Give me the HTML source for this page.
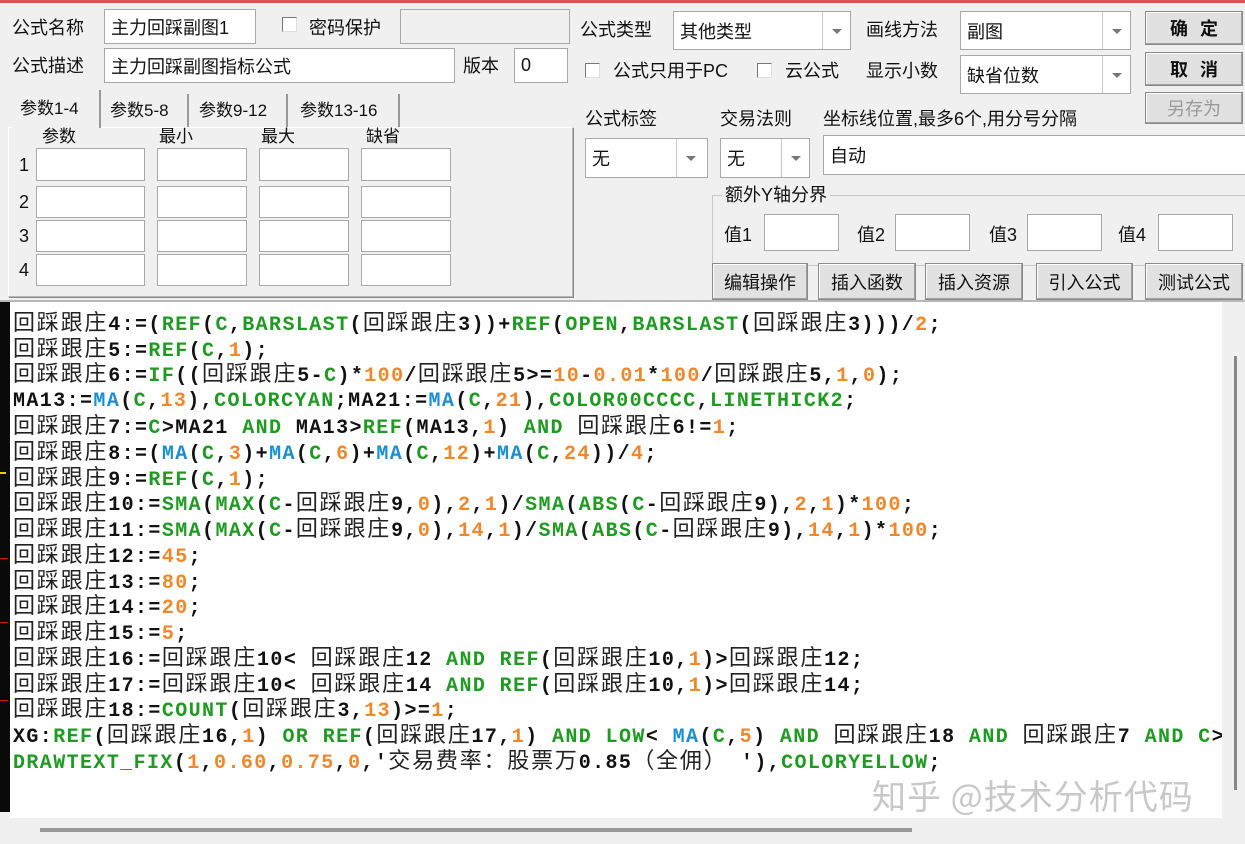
<!DOCTYPE html>
<html><head><meta charset="utf-8"><style>
*{margin:0;padding:0;box-sizing:border-box}
body{width:1245px;height:844px;background:#f0f0f0;position:relative;overflow:hidden;font-family:"Liberation Sans","Noto Sans CJK SC",sans-serif;font-size:18px;color:#111}
.a{position:absolute}
.lb{position:absolute;font-size:18px;line-height:22px;white-space:nowrap}
.in{position:absolute;background:#fff;border:1px solid #a8a8a8;font-size:18px;padding-left:6px;display:flex;align-items:center}
.dis{background:#f0f0f0}
.cb{position:absolute;width:15px;height:15px;border:1px solid #777;background:#fff;border-right-color:#ddd;border-bottom-color:#ddd}
.cmb{position:absolute;background:#fff;border:1px solid #a8a8a8;font-size:18px;padding-left:6px;display:flex;align-items:center}
.cmb .ar{position:absolute;right:0;top:0;bottom:0;width:28px;border-left:1px solid #c8c8c8}
.cmb .ar:after{content:"";position:absolute;left:9px;top:50%;margin-top:-2px;border-left:5px solid transparent;border-right:5px solid transparent;border-top:5px solid #777}
.bt{position:absolute;background:#e1e1e1;border:1px solid #8a8a8a;box-shadow:inset -1px -1px 0 #a0a0a0,inset 1px 1px 0 #fff;font-size:18px;display:flex;align-items:center;justify-content:center}
.code{position:absolute;left:10px;top:302px;width:1212px;height:516px;background:#fff;overflow:hidden}
.ln{position:absolute;left:3px;font-family:"Liberation Mono","Noto Sans CJK SC",monospace;font-weight:bold;font-size:20px;letter-spacing:1.4px;white-space:pre;color:#111;line-height:26px}
.ln .c{font-family:"Noto Sans CJK SC",sans-serif;font-weight:normal;font-size:22px;letter-spacing:1.8px;color:#222}
.g{color:#1f9a22}.o{color:#f0872a}.b{color:#1c8fd4}
</style></head><body>
<div class="a" style="left:0;top:0;width:1245px;height:3px;background:#d9534f"></div>

<div class="lb" style="left:12px;top:17px">公式名称</div>
<div class="in" style="left:104px;top:9px;width:152px;height:35px">主力回踩副图1</div>
<div class="cb" style="left:282px;top:17px"></div>
<div class="lb" style="left:309px;top:17px">密码保护</div>
<div class="in dis" style="left:400px;top:9px;width:170px;height:35px"></div>

<div class="lb" style="left:12px;top:55px">公式描述</div>
<div class="in" style="left:104px;top:48px;width:351px;height:35px">主力回踩副图指标公式</div>
<div class="lb" style="left:463px;top:55px">版本</div>
<div class="in" style="left:514px;top:48px;width:54px;height:35px">0</div>

<div class="a" style="left:8px;top:127px;width:565px;height:170px;border:1px solid #b8b8b8;border-top-color:#fff;border-left-color:#fff;box-shadow:1px 1px 0 #888"></div>
<div class="a" style="left:12px;top:90px;width:89px;height:38px;background:#f0f0f0;border-right:2px solid #999"></div>
<div class="lb" style="left:20px;top:98px;font-size:17px">参数1-4</div>
<div class="a" style="left:101px;top:94px;width:88px;height:33px;border-right:2px solid #999"></div>
<div class="lb" style="left:110px;top:100px;font-size:17px">参数5-8</div>
<div class="a" style="left:189px;top:94px;width:99px;height:33px;border-right:2px solid #999"></div>
<div class="lb" style="left:199px;top:100px;font-size:17px">参数9-12</div>
<div class="a" style="left:288px;top:94px;width:112px;height:33px;border-right:2px solid #999"></div>
<div class="lb" style="left:300px;top:100px;font-size:17px">参数13-16</div>

<div class="lb" style="left:42px;top:126px;font-size:17px">参数</div>
<div class="lb" style="left:159px;top:126px;font-size:17px">最小</div>
<div class="lb" style="left:261px;top:126px;font-size:17px">最大</div>
<div class="lb" style="left:366px;top:126px;font-size:17px">缺省</div>

<div class="lb" style="left:19px;top:154px">1</div>
<div class="lb" style="left:19px;top:191px">2</div>
<div class="lb" style="left:19px;top:225px">3</div>
<div class="lb" style="left:19px;top:259px">4</div>
<div class="in" style="left:36px;top:148px;width:109px;height:33px"></div><div class="in" style="left:157px;top:148px;width:90px;height:33px"></div><div class="in" style="left:259px;top:148px;width:90px;height:33px"></div><div class="in" style="left:361px;top:148px;width:90px;height:33px"></div>
<div class="in" style="left:36px;top:186px;width:109px;height:32px"></div><div class="in" style="left:157px;top:186px;width:90px;height:32px"></div><div class="in" style="left:259px;top:186px;width:90px;height:32px"></div><div class="in" style="left:361px;top:186px;width:90px;height:32px"></div>
<div class="in" style="left:36px;top:220px;width:109px;height:32px"></div><div class="in" style="left:157px;top:220px;width:90px;height:32px"></div><div class="in" style="left:259px;top:220px;width:90px;height:32px"></div><div class="in" style="left:361px;top:220px;width:90px;height:32px"></div>
<div class="in" style="left:36px;top:254px;width:109px;height:32px"></div><div class="in" style="left:157px;top:254px;width:90px;height:32px"></div><div class="in" style="left:259px;top:254px;width:90px;height:32px"></div><div class="in" style="left:361px;top:254px;width:90px;height:32px"></div>

<div class="lb" style="left:580px;top:19px">公式类型</div>
<div class="cmb" style="left:673px;top:11px;width:178px;height:39px">其他类型<span class="ar"></span></div>
<div class="lb" style="left:866px;top:19px">画线方法</div>
<div class="cmb" style="left:960px;top:11px;width:171px;height:39px">副图<span class="ar"></span></div>
<div class="bt" style="left:1145px;top:11px;width:98px;height:34px;font-weight:bold;letter-spacing:12px;padding-left:12px">确定</div>
<div class="bt" style="left:1145px;top:52px;width:98px;height:34px;font-weight:bold;letter-spacing:12px;padding-left:12px">取消</div>
<div class="bt" style="left:1145px;top:92px;width:98px;height:32px;color:#999">另存为</div>

<div class="cb" style="left:585px;top:63px"></div>
<div class="lb" style="left:613px;top:60px">公式只用于PC</div>
<div class="cb" style="left:757px;top:63px"></div>
<div class="lb" style="left:785px;top:60px">云公式</div>
<div class="lb" style="left:866px;top:60px">显示小数</div>
<div class="cmb" style="left:960px;top:55px;width:171px;height:39px">缺省位数<span class="ar"></span></div>

<div class="lb" style="left:585px;top:108px">公式标签</div>
<div class="lb" style="left:720px;top:108px">交易法则</div>
<div class="lb" style="left:823px;top:108px">坐标线位置,最多6个,用分号分隔</div>
<div class="cmb" style="left:585px;top:138px;width:123px;height:40px">无<span class="ar" style="width:31px"></span></div>
<div class="cmb" style="left:720px;top:138px;width:90px;height:40px">无<span class="ar"></span></div>
<div class="in" style="left:823px;top:135px;width:430px;height:40px;align-items:flex-start;padding-top:6px">自动</div>

<div class="a" style="left:712px;top:195px;width:540px;height:71px;border:1px solid #c8c8c8"></div>
<div class="lb" style="left:722px;top:184px;background:#f0f0f0;padding:0 3px">额外Y轴分界</div>
<div class="lb" style="left:724px;top:224px">值1</div><div class="in" style="left:764px;top:214px;width:75px;height:37px"></div>
<div class="lb" style="left:857px;top:224px">值2</div><div class="in" style="left:895px;top:214px;width:75px;height:37px"></div>
<div class="lb" style="left:989px;top:224px">值3</div><div class="in" style="left:1027px;top:214px;width:75px;height:37px"></div>
<div class="lb" style="left:1118px;top:224px">值4</div><div class="in" style="left:1158px;top:214px;width:75px;height:37px"></div>

<div class="bt" style="left:712px;top:263px;width:96px;height:37px">编辑操作</div>
<div class="bt" style="left:818px;top:263px;width:98px;height:37px">插入函数</div>
<div class="bt" style="left:925px;top:263px;width:98px;height:37px">插入资源</div>
<div class="bt" style="left:1036px;top:263px;width:97px;height:37px">引入公式</div>
<div class="bt" style="left:1145px;top:263px;width:98px;height:37px">测试公式</div>

<div class="a" style="left:0;top:300px;width:10px;height:512px;background:#0a0a0a"></div>
<div class="a" style="left:0;top:472px;width:6px;height:2px;background:#e8d000"></div>
<div class="a" style="left:0;top:558px;width:8px;height:1px;background:#c02020"></div>
<div class="a" style="left:0;top:622px;width:8px;height:1px;background:#c02020"></div>
<div class="a" style="left:0;top:700px;width:8px;height:1px;background:#c02020"></div>
<div class="a" style="left:0;top:300px;width:1245px;height:2px;background:#b8b8b8"></div>

<div class="code">
<div class="ln" style="top:6px"><span class="c">回踩跟庄</span>4:=(<span class="g">REF</span>(<span class="g">C</span>,<span class="g">BARSLAST</span>(<span class="c">回踩跟庄</span>3))+<span class="g">REF</span>(<span class="g">OPEN</span>,<span class="g">BARSLAST</span>(<span class="c">回踩跟庄</span>3)))/<span class="o">2</span>;</div>
<div class="ln" style="top:32px"><span class="c">回踩跟庄</span>5:=<span class="g">REF</span>(<span class="g">C</span>,<span class="o">1</span>);</div>
<div class="ln" style="top:57px"><span class="c">回踩跟庄</span>6:=<span class="g">IF</span>((<span class="c">回踩跟庄</span>5-<span class="g">C</span>)*<span class="o">100</span>/<span class="c">回踩跟庄</span>5>=<span class="o">10</span>-<span class="o">0.01</span>*<span class="o">100</span>/<span class="c">回踩跟庄</span>5,<span class="o">1</span>,<span class="o">0</span>);</div>
<div class="ln" style="top:87px">MA13:=<span class="b">MA</span>(<span class="g">C</span>,<span class="o">13</span>),<span class="g">COLORCYAN</span>;MA21:=<span class="b">MA</span>(<span class="g">C</span>,<span class="o">21</span>),<span class="g">COLOR00CCCC</span>,<span class="g">LINETHICK2</span>;</div>
<div class="ln" style="top:109px"><span class="c">回踩跟庄</span>7:=<span class="g">C</span>>MA21 <span class="g">AND</span> MA13><span class="g">REF</span>(MA13,<span class="o">1</span>) <span class="g">AND</span> <span class="c">回踩跟庄</span>6!=<span class="o">1</span>;</div>
<div class="ln" style="top:135px"><span class="c">回踩跟庄</span>8:=(<span class="b">MA</span>(<span class="g">C</span>,<span class="o">3</span>)+<span class="b">MA</span>(<span class="g">C</span>,<span class="o">6</span>)+<span class="b">MA</span>(<span class="g">C</span>,<span class="o">12</span>)+<span class="b">MA</span>(<span class="g">C</span>,<span class="o">24</span>))/<span class="o">4</span>;</div>
<div class="ln" style="top:161px"><span class="c">回踩跟庄</span>9:=<span class="g">REF</span>(<span class="g">C</span>,<span class="o">1</span>);</div>
<div class="ln" style="top:186px"><span class="c">回踩跟庄</span>10:=<span class="g">SMA</span>(<span class="g">MAX</span>(<span class="g">C</span>-<span class="c">回踩跟庄</span>9,<span class="o">0</span>),<span class="o">2</span>,<span class="o">1</span>)/<span class="g">SMA</span>(<span class="g">ABS</span>(<span class="g">C</span>-<span class="c">回踩跟庄</span>9),<span class="o">2</span>,<span class="o">1</span>)*<span class="o">100</span>;</div>
<div class="ln" style="top:212px"><span class="c">回踩跟庄</span>11:=<span class="g">SMA</span>(<span class="g">MAX</span>(<span class="g">C</span>-<span class="c">回踩跟庄</span>9,<span class="o">0</span>),<span class="o">14</span>,<span class="o">1</span>)/<span class="g">SMA</span>(<span class="g">ABS</span>(<span class="g">C</span>-<span class="c">回踩跟庄</span>9),<span class="o">14</span>,<span class="o">1</span>)*<span class="o">100</span>;</div>
<div class="ln" style="top:238px"><span class="c">回踩跟庄</span>12:=<span class="o">45</span>;</div>
<div class="ln" style="top:264px"><span class="c">回踩跟庄</span>13:=<span class="o">80</span>;</div>
<div class="ln" style="top:289px"><span class="c">回踩跟庄</span>14:=<span class="o">20</span>;</div>
<div class="ln" style="top:315px"><span class="c">回踩跟庄</span>15:=<span class="o">5</span>;</div>
<div class="ln" style="top:341px"><span class="c">回踩跟庄</span>16:=<span class="c">回踩跟庄</span>10&lt; <span class="c">回踩跟庄</span>12 <span class="g">AND</span> <span class="g">REF</span>(<span class="c">回踩跟庄</span>10,<span class="o">1</span>)><span class="c">回踩跟庄</span>12;</div>
<div class="ln" style="top:367px"><span class="c">回踩跟庄</span>17:=<span class="c">回踩跟庄</span>10&lt; <span class="c">回踩跟庄</span>14 <span class="g">AND</span> <span class="g">REF</span>(<span class="c">回踩跟庄</span>10,<span class="o">1</span>)><span class="c">回踩跟庄</span>14;</div>
<div class="ln" style="top:392px"><span class="c">回踩跟庄</span>18:=<span class="g">COUNT</span>(<span class="c">回踩跟庄</span>3,<span class="o">13</span>)>=<span class="o">1</span>;</div>
<div class="ln" style="top:418px">XG:<span class="g">REF</span>(<span class="c">回踩跟庄</span>16,<span class="o">1</span>) <span class="g">OR</span> <span class="g">REF</span>(<span class="c">回踩跟庄</span>17,<span class="o">1</span>) <span class="g">AND</span> <span class="g">LOW</span>&lt; <span class="b">MA</span>(<span class="g">C</span>,<span class="o">5</span>) <span class="g">AND</span> <span class="c">回踩跟庄</span>18 <span class="g">AND</span> <span class="c">回踩跟庄</span>7 <span class="g">AND</span> <span class="g">C</span>></div>
<div class="ln" style="top:444px"><span class="g">DRAWTEXT_FIX</span>(<span class="o">1</span>,<span class="o">0.60</span>,<span class="o">0.75</span>,<span class="o">0</span>,'<span class="c">交易费率：股票万</span>0.85<span class="c">（全佣）</span> '),<span class="g">COLORYELLOW</span>;</div>
<div class="a" style="left:862px;top:468px;font-family:'Noto Sans CJK SC',sans-serif;font-size:34px;color:#c8c8c8;letter-spacing:1px;white-space:nowrap">知乎 @技术分析代码</div>
</div>
<div class="a" style="left:1234px;top:356px;width:3px;height:434px;background:#888"></div>
<div class="a" style="left:40px;top:828px;width:872px;height:4px;background:#999"></div>
</body></html>
